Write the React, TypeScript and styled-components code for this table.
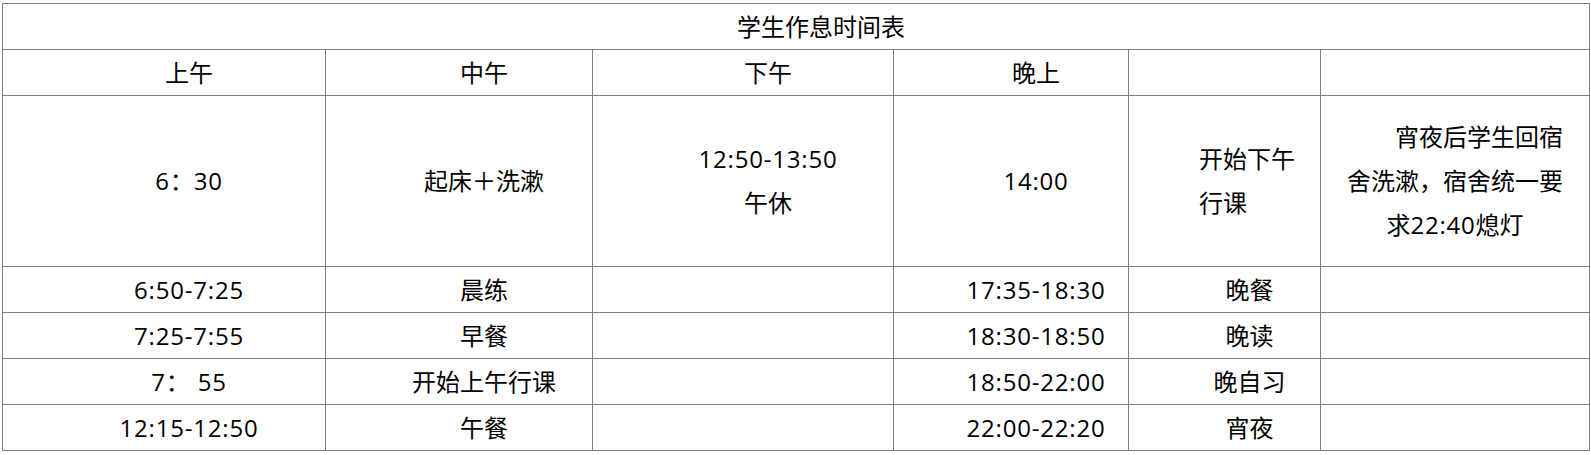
import React from "react";
import styled, { createGlobalStyle } from "styled-components";

const Global = createGlobalStyle`
  html, body { margin: 0; padding: 0; background: #ffffff; }
  body {
    font-family: "Open Sans", "Noto Sans CJK SC", "Noto Sans", sans-serif;
    color: #000;
  }
`;

const Page = styled.div`
  padding: 3px 0 0 2px;
`;

const Table = styled.table`
  border-collapse: collapse;
  table-layout: fixed;
  width: 1587px;
  border: 1px solid #1f1f1f;
  font-size: 24px;
  line-height: 44px;
`;

const Col = styled.col<{ $w: number }>`
  width: ${(p) => p.$w}px;
`;

const Row = styled.tr<{ $h: number }>`
  height: ${(p) => p.$h}px;
`;

const Cell = styled.td<{ $shift?: number; $left?: number; $indent?: boolean }>`
  border: 1px solid #7f7f7f;
  padding: 0;
  padding-left: ${(p) => (p.$left !== undefined ? p.$left : Math.max(0, (p.$shift ?? 25) * 2))}px;
  padding-right: ${(p) => (p.$left !== undefined ? 0 : Math.max(0, -(p.$shift ?? 25) * 2))}px;
  text-align: ${(p) => (p.$left !== undefined ? "left" : "center")};
  text-indent: ${(p) => (p.$indent ? "2em" : "0")};
  vertical-align: middle;
  white-space: nowrap;
  overflow: hidden;
`;

const Num = styled.span`
  letter-spacing: 0.8px;
`;

type Small = { a: string; b: string; d: string; e: string };

const smallRows: Small[] = [
  { a: "6:50-7:25", b: "晨练", d: "17:35-18:30", e: "晚餐" },
  { a: "7:25-7:55", b: "早餐", d: "18:30-18:50", e: "晚读" },
  { a: "7： 55", b: "开始上午行课", d: "18:50-22:00", e: "晚自习" },
  { a: "12:15-12:50", b: "午餐", d: "22:00-22:20", e: "宵夜" },
];

export default function App() {
  return (
    <>
      <Global />
      <Page>
        <Table>
          <colgroup>
            <Col $w={323} />
            <Col $w={267} />
            <Col $w={301} />
            <Col $w={235} />
            <Col $w={192} />
            <Col $w={269} />
          </colgroup>
          <tbody>
            <Row $h={46}>
              <Cell colSpan={6}>学生作息时间表</Cell>
            </Row>
            <Row $h={46}>
              <Cell>上午</Cell>
              <Cell>中午</Cell>
              <Cell>下午</Cell>
              <Cell>晚上</Cell>
              <Cell />
              <Cell />
            </Row>
            <Row $h={171}>
              <Cell>
                <Num>6</Num>：<Num>30</Num>
              </Cell>
              <Cell>起床＋洗漱</Cell>
              <Cell>
                <Num>12:50-13:50</Num>
                <br />
                午休
              </Cell>
              <Cell>
                <Num>14:00</Num>
              </Cell>
              <Cell $left={70}>
                开始下午
                <br />
                行课
              </Cell>
              <Cell $shift={0} $indent>
                宵夜后学生回宿
                <br />
                舍洗漱，宿舍统一要
                <br />
                求<Num>22:40</Num>熄灯
              </Cell>
            </Row>
            {smallRows.map((r) => (
              <Row $h={46} key={r.a}>
                <Cell>
                  <Num>{r.a}</Num>
                </Cell>
                <Cell>{r.b}</Cell>
                <Cell />
                <Cell>
                  <Num>{r.d}</Num>
                </Cell>
                <Cell>{r.e}</Cell>
                <Cell />
              </Row>
            ))}
          </tbody>
        </Table>
      </Page>
    </>
  );
}
